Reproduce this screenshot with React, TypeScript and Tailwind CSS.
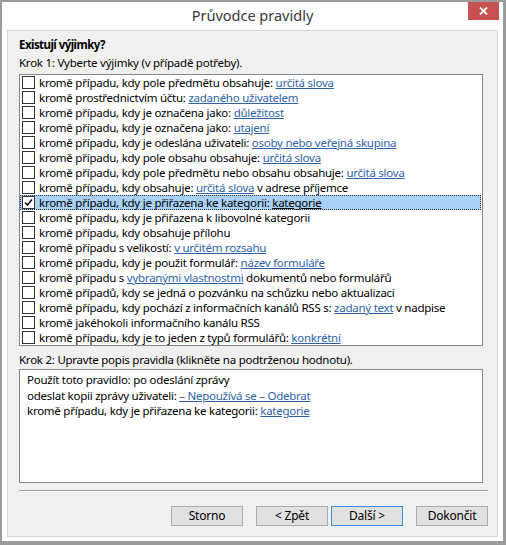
import { Fragment } from 'react';

type Seg = { t: string; link?: boolean };

const font = { fontFamily: '"Noto Sans", "DejaVu Sans", sans-serif' };

const exceptions: { segs: Seg[]; checked?: boolean }[] = [
  { segs: [{ t: 'kromě případu, kdy pole předmětu obsahuje: ' }, { t: 'určitá slova', link: true }] },
  { segs: [{ t: 'kromě prostřednictvím účtu: ' }, { t: 'zadaného uživatelem', link: true }] },
  { segs: [{ t: 'kromě případu, kdy je označena jako: ' }, { t: 'důležitost', link: true }] },
  { segs: [{ t: 'kromě případu, kdy je označena jako: ' }, { t: 'utajení', link: true }] },
  { segs: [{ t: 'kromě případu, kdy je odeslána uživateli: ' }, { t: 'osoby nebo veřejná skupina', link: true }] },
  { segs: [{ t: 'kromě případu, kdy pole obsahu obsahuje: ' }, { t: 'určitá slova', link: true }] },
  { segs: [{ t: 'kromě případu, kdy pole předmětu nebo obsahu obsahuje: ' }, { t: 'určitá slova', link: true }] },
  { segs: [{ t: 'kromě případu, kdy obsahuje: ' }, { t: 'určitá slova', link: true }, { t: ' v adrese příjemce' }] },
  { segs: [{ t: 'kromě případu, kdy je přiřazena ke kategorii: ' }, { t: 'kategorie', link: true }], checked: true },
  { segs: [{ t: 'kromě případu, kdy je přiřazena k libovolné kategorii' }] },
  { segs: [{ t: 'kromě případu, kdy obsahuje přílohu' }] },
  { segs: [{ t: 'kromě případu s velikostí: ' }, { t: 'v určitém rozsahu', link: true }] },
  { segs: [{ t: 'kromě případu, kdy je použit formulář: ' }, { t: 'název formuláře', link: true }] },
  { segs: [{ t: 'kromě případu s ' }, { t: 'vybranými vlastnostmi', link: true }, { t: ' dokumentů nebo formulářů' }] },
  { segs: [{ t: 'kromě případů, kdy se jedná o pozvánku na schůzku nebo aktualizaci' }] },
  { segs: [{ t: 'kromě případu, kdy pochází z informačních kanálů RSS s: ' }, { t: 'zadaný text', link: true }, { t: ' v nadpise' }] },
  { segs: [{ t: 'kromě jakéhokoli informačního kanálu RSS' }] },
  { segs: [{ t: 'kromě případu, kdy je to jeden z typů formulářů: ' }, { t: 'konkrétní', link: true }] },
];

const description: Seg[][] = [
  [{ t: 'Použít toto pravidlo: po odeslání zprávy' }],
  [{ t: 'odeslat kopii zprávy uživateli: ' }, { t: '– Nepoužívá se – Odebrat', link: true }],
  [{ t: 'kromě případu, kdy je přiřazena ke kategorii: ' }, { t: 'kategorie', link: true }],
];

function Segs({ segs, dark }: { segs: Seg[]; dark?: boolean }) {
  return (
    <>
      {segs.map((s, i) => (
        <Fragment key={i}>
          {s.link ? (
            <span className={dark ? 'underline text-[#000]' : 'underline text-[#2d63a6]'}>{s.t}</span>
          ) : (
            <span className="whitespace-pre">{s.t}</span>
          )}
        </Fragment>
      ))}
    </>
  );
}

function CheckBox({ checked }: { checked?: boolean }) {
  return (
    <span className="w-[13px] h-[13px] shrink-0 border border-[#333] bg-white flex items-center justify-center">
      {checked && (
        <svg width="9" height="9" viewBox="0 0 9 9">
          <path d="M1 4.5 L3.5 7 L8 1.5" fill="none" stroke="#111" strokeWidth="1.6" />
        </svg>
      )}
    </span>
  );
}

function Btn({ label, focused }: { label: string; focused?: boolean }) {
  return (
    <button
      className={
        'w-[72px] h-[20px] text-[12px] leading-none tracking-[-0.2px] text-[#000] bg-[#e1e1e1] border ' +
        (focused ? 'border-[#3c8de0]' : 'border-[#adadad]')
      }
    >
      {label}
    </button>
  );
}

export default function App() {
  return (
    <div className="w-[506px] h-[545px] bg-[#9b9b9b] pt-[2px] pl-[2px] pr-[3px] pb-[4px]" style={font}>
      <div className="relative w-full h-full bg-white flex flex-col px-[5px] pb-[4px]">
        {/* title bar */}
        <div className="h-[28px] flex items-center justify-center text-[14.5px] text-[#3a3a3a]">
          Průvodce pravidly
        </div>
        <div className="absolute top-0 right-[4px] w-[31px] h-[18px] bg-[#c75050] flex items-center justify-center">
          <svg width="9" height="8" viewBox="0 0 9 8">
            <path d="M1 0.5 L8 7.5 M8 0.5 L1 7.5" stroke="#fff" strokeWidth="1.8" />
          </svg>
        </div>

        {/* wizard body */}
        <div className="flex-1 bg-[#f0f0f0] border border-[#d6d6d6] pl-[11px] pt-[6px] flex flex-col text-[11.5px] tracking-[-0.25px] text-[#000]">
          <div className="h-[15px] leading-[15px] font-bold tracking-[-0.55px]">Existují výjimky?</div>
          <div className="h-[15px] leading-[15px] mt-[3px]">Krok 1: Vyberte výjimky (v případě potřeby).</div>

          <div className="mt-[4px] w-[464px] bg-white border border-[#82878f] flex flex-col">
            {exceptions.map((row, i) => (
              <div
                key={i}
                className={
                  'h-[15px] flex items-center gap-[4px] pl-[2px] mr-[1px] whitespace-nowrap overflow-hidden ' +
                  (row.checked ? 'bg-[#a9d0f5] outline-1 outline-dotted outline-[#333] -outline-offset-1' : '')
                }
              >
                <CheckBox checked={row.checked} />
                <span className="h-[15px] leading-[15px]">
                  <Segs segs={row.segs} dark={row.checked} />
                </span>
              </div>
            ))}
          </div>

          <div className="h-[15px] leading-[15px] mt-[6px]">Krok 2: Upravte popis pravidla (klikněte na podtrženou hodnotu).</div>
          <div className="mt-[2px] w-[464px] h-[114px] bg-white border border-[#82878f] pl-[7px] pt-[2px]">
            {description.map((line, i) => (
              <div key={i} className="h-[15.5px] leading-[15.5px] whitespace-nowrap">
                <Segs segs={line} />
              </div>
            ))}
          </div>

          <div className="mt-[7px] w-[469px] h-[2px] border-t border-[#a0a0a0] border-b border-b-white" />

          <div className="w-[469px] mt-[14px] flex justify-end">
            <Btn label="Storno" />
            <div className="ml-[13px] flex gap-[3px]">
              <Btn label="< Zpět" />
              <Btn label="Další >" focused />
            </div>
            <div className="ml-[13px]">
              <Btn label="Dokončit" />
            </div>
          </div>
        </div>
      </div>
    </div>
  );
}
